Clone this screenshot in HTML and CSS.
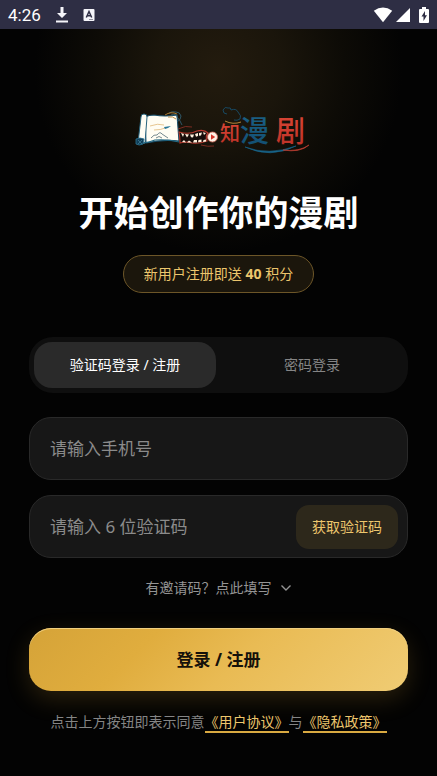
FILE: index.html
```html
<!DOCTYPE html>
<html lang="zh-CN">
<head>
<meta charset="utf-8">
<meta name="viewport" content="width=device-width, initial-scale=1">
<title>登录 / 注册</title>
<link rel="stylesheet" href="styles.css">
</head>
<body>
<header class="status">
  <div class="status-group">
    <span class="clock">4:26</span>
    <svg width="14" height="18" viewBox="0 0 14 18" aria-hidden="true"><path d="M5.500 1h3v6H12l-5 5-5-5h3.500zM1 14.500h12v2H1z" fill="#f5f5fa"/></svg>
    <svg width="12" height="14" viewBox="0 0 12 14" aria-hidden="true"><rect x="0.500" y="1" width="11" height="12" rx="1" fill="#f5f5fa"/><path d="M3.300 9.500 6 3.500l2.700 6M4.300 7.700h3.400" fill="none" stroke="#2e2e44" stroke-width="1.500"/><path d="M6.500 11.500h1M8.500 11.500h1" stroke="#2e2e44"/></svg>
  </div>
  <div class="status-icons">
    <svg width="20" height="16" viewBox="0 0 20 16" aria-hidden="true"><path d="M.8 3.800Q10-2.800 19.200 3.800L10 15.300z" fill="#fff"/></svg>
    <svg width="14" height="16" viewBox="0 0 14 16" aria-hidden="true"><path d="M14 1v14H0z" fill="#fff"/></svg>
    <svg class="battery" width="10" height="16" viewBox="0 0 10 16" aria-hidden="true"><path d="M3 0h4v2h2q1 0 1 1v12q0 1-1 1H1q-1 0-1-1V3q0-1 1-1h2z" fill="#fff"/><path d="M6 4 2.500 9.500h2V14L8 8.300H6z" fill="#2e2e44"/></svg>
  </div>
</header>
<main class="page">
  <svg class="logo" width="184" height="60" viewBox="130 98 184 60" role="img" aria-label="知漫剧">
    <defs>
      <linearGradient id="red" x1="0" y1="0" x2="0" y2="1"><stop offset="0" stop-color="#e04a38"/><stop offset="1" stop-color="#b92f26"/></linearGradient>
      <linearGradient id="blue" x1="0" y1="0" x2="0" y2="1"><stop offset="0" stop-color="#1c6389"/><stop offset="1" stop-color="#124d70"/></linearGradient>
    </defs>
    <path d="M145 117q4-2 9-2 11 2 23 0l2 26q-17-2-33 2z" fill="#fffdf3" stroke="#174d68" stroke-width="1.100"/>
    <path d="M141 117q0-3 3-3 3 0 3 3l-2 26q-4 2-7 0z" fill="#fffdf3" stroke="#28647e" stroke-width="1"/>
    <path d="M136 139q4-2 8 0l-1 5q-4 2-7 0z" fill="#123f59" stroke="#2c7390" stroke-width=".8"/>
    <path d="m138 140 4 4m0-4-4 4" stroke="#4b92a8" stroke-width=".6"/>
    <path d="M143 143q7-1 12-3 12-1 24 2" fill="none" stroke="#236983" stroke-width="1.200"/>
    <path d="M150 126q8-3 14-1M154 130q7 0 11-2" fill="none" stroke="#dfb978" stroke-width=".8"/>
    <path d="M151 138q3-4 6-3 3-4 5-1l6 4M156 138q3-3 6 0" fill="none" stroke="#526b74" stroke-width=".8"/>
    <path d="m164 127 7-1-3 2-3 1z" fill="#287798"/>
    <path d="M169 113q3-2 7-1 4 0 5 4 0 4-4 6M171 115q6-2 6 2 3 3 5 8" fill="none" stroke="#315d70" stroke-width=".9"/>
    <path d="M165 115q6-4 12-1M168 117q5-1 8 2" fill="none" stroke="#b88336" stroke-width=".9"/>
    <path d="M179 132q10 3 18-1 7-2 11 2-3 3-1 8-11 4-19 1-5 0-8 1 0-6-1-11z" fill="#170e0b" stroke="#b83c30" stroke-width="1.100"/>
    <path d="m181 133 3 1-1 3zm4 1 4 .5-2 3zm5 .5h4l-1 3-2-.3zm5-.5 3-1v3l-2 .8zm4-1 3-.6-1 3-2 .4zm4-.7 3 .7-2 2zM182 142l2-2 2 2.500zm5 .5 2-2 3 2zm6 0 1-2.500 3 0v2.500zm5-.3.500-2.300 3-.3v2.400zm5-.3.500-2 2.500-.4v2z" fill="#fff0dc"/>
    <path d="M178 129q8-4 14-2M201 145q7 2 13 1" fill="none" stroke="#842d23" stroke-width=".9"/>
    <circle cx="212.500" cy="137" r="5" fill="#fff2e5" stroke="#d86d5d" stroke-width=".8"/>
    <path d="m211 134.300 4.200 2.700-4.200 2.700z" fill="#d63528"/>
    <text class="logo-text logo-small" fill="url(#red)" x="220" y="141">知</text>
    <text class="logo-text" fill="url(#blue)" x="240" y="142">漫</text>
    <text class="logo-text" fill="url(#red)" x="276" y="142">剧</text>
    <path d="M227 114q-4 0-4-4 2-4 5-2 3-1 3 2 5-2 7 2 4 4 2 7-3 2-6 1" fill="none" stroke="#174e6b" stroke-width=".9"/>
    <path d="M225 121q8 4 16 1" fill="none" stroke="#c6913c" stroke-width=".9"/>
    <path d="M245 147q24 9 51-1-26 13-51 1z" fill="#17658b" stroke="#17658b" stroke-width=".6"/>
    <path d="M283 150q16 2 26-5-9 8-26 5z" fill="#b83c30" stroke="#b83c30" stroke-width=".7"/>
  </svg>
  <h1>开始创作你的漫剧</h1>
  <p class="bonus">新用户注册即送 <strong>40</strong> 积分</p>
  <form class="form">
    <div class="tabs" role="tablist">
      <button class="tab active" type="button" role="tab" aria-selected="true">验证码登录 / 注册</button>
      <button class="tab" type="button" role="tab" aria-selected="false">密码登录</button>
    </div>
    <div class="field"><input type="tel" aria-label="手机号" placeholder="请输入手机号"></div>
    <div class="field"><input type="text" inputmode="numeric" aria-label="验证码" placeholder="请输入 6 位验证码"><button class="code" type="button">获取验证码</button></div>
    <button class="invite" type="button">有邀请码？点此填写<svg width="12" height="8" viewBox="0 0 12 8" aria-hidden="true"><path d="m1.500 1.500 4.500 4.500 4.500-4.500" fill="none" stroke="currentColor" stroke-width="1.400"/></svg></button>
    <button class="submit" type="submit">登录 / 注册</button>
  </form>
  <p class="terms">点击上方按钮即表示同意<a href="#terms">《用户协议》</a>与<a href="#privacy">《隐私政策》</a></p>
</main>
</body>
</html>
```
FILE: styles.css
```css
* { box-sizing: border-box; }

body {
  margin: 0;
  min-height: 100vh;
  background: #030303;
  color: #fff;
  font-family: "Noto Sans", "Noto Sans CJK SC", sans-serif;
  font-size: 14px;
  line-height: 20px;
}

button, input { font: inherit; color: inherit; border: 0; margin: 0; }
button { cursor: pointer; padding: 0; }
h1, p { margin: 0; }
svg { display: block; flex: none; }

.status {
  display: flex;
  align-items: center;
  justify-content: space-between;
  height: 29px;
  padding: 0 8px;
  background: #2e2e44;
}
.status-group, .status-icons { display: flex; align-items: center; }
.status-group { gap: 14px; }
.status-icons { gap: 3px; }
.battery { margin-left: 6px; }
.clock { font-family: Roboto, sans-serif; font-size: 17px; }

.page {
  display: flex;
  flex-direction: column;
  align-items: center;
  min-height: calc(100vh - 29px);
  padding: 69px 29px 32px;
  background: radial-gradient(circle 184px at 50% 40px, #231b0e, #1a150b 35%, #0d0b06 68%, #030303);
}

.logo { margin-left: 6px; }
.logo-text { font-family: "Noto Sans CJK SC", sans-serif; font-size: 29px; font-weight: 500; }
.logo-small { font-size: 20px; }

h1 {
  margin-top: 31px;
  font-size: 35px;
  line-height: 48px;
  font-weight: 700;
  white-space: nowrap;
}

.bonus {
  margin-top: 18px;
  padding: 8px 20px;
  border: 1px solid #6d5628;
  border-radius: 20px;
  background: #1b160c;
  color: #edc66d;
}

.form { display: flex; flex-direction: column; width: 100%; margin-top: 44px; }

.tabs {
  display: grid;
  grid-template-columns: 1fr 1fr;
  gap: 5px;
  padding: 5px;
  margin-bottom: 24px;
  border-radius: 24px;
  background: #0f0f0f;
}
.tab { height: 46px; border-radius: 18px; background: none; color: #858585; }
.tab.active { background: #2a2a2a; color: #fff; }

.field {
  display: flex;
  align-items: center;
  height: 63px;
  padding: 0 9px 0 20px;
  margin-bottom: 15px;
  border: 1px solid #292929;
  border-radius: 22px;
  background: #171717;
}
.field input {
  flex: 1;
  min-width: 0;
  height: 100%;
  padding: 0;
  background: none;
  outline: none;
  font-size: 17px;
}
.field input::placeholder { color: #8b8b8b; opacity: 1; }
.code { height: 44px; padding: 0 16px; border-radius: 13px; background: #2d281b; color: #edc66d; }

.invite {
  display: flex;
  align-items: center;
  align-self: center;
  gap: 8px;
  margin-top: 5px;
  background: none;
  color: #949494;
}

.submit {
  height: 63px;
  margin-top: 30px;
  border-radius: 22px;
  background: linear-gradient(135deg, #d5a338, #e0ad3e 30%, #e9bb54 55%, #f0cc74);
  box-shadow: 0 8px 24px #d4a23730, inset 0 1px #f0cf80;
  color: #15110a;
  font-size: 17px;
  font-weight: 700;
}

.terms { margin-top: 21px; color: #858585; text-align: center; white-space: nowrap; }
.terms a { color: #edc66d; text-decoration: none; border-bottom: 2px solid #d9a941; }
```
